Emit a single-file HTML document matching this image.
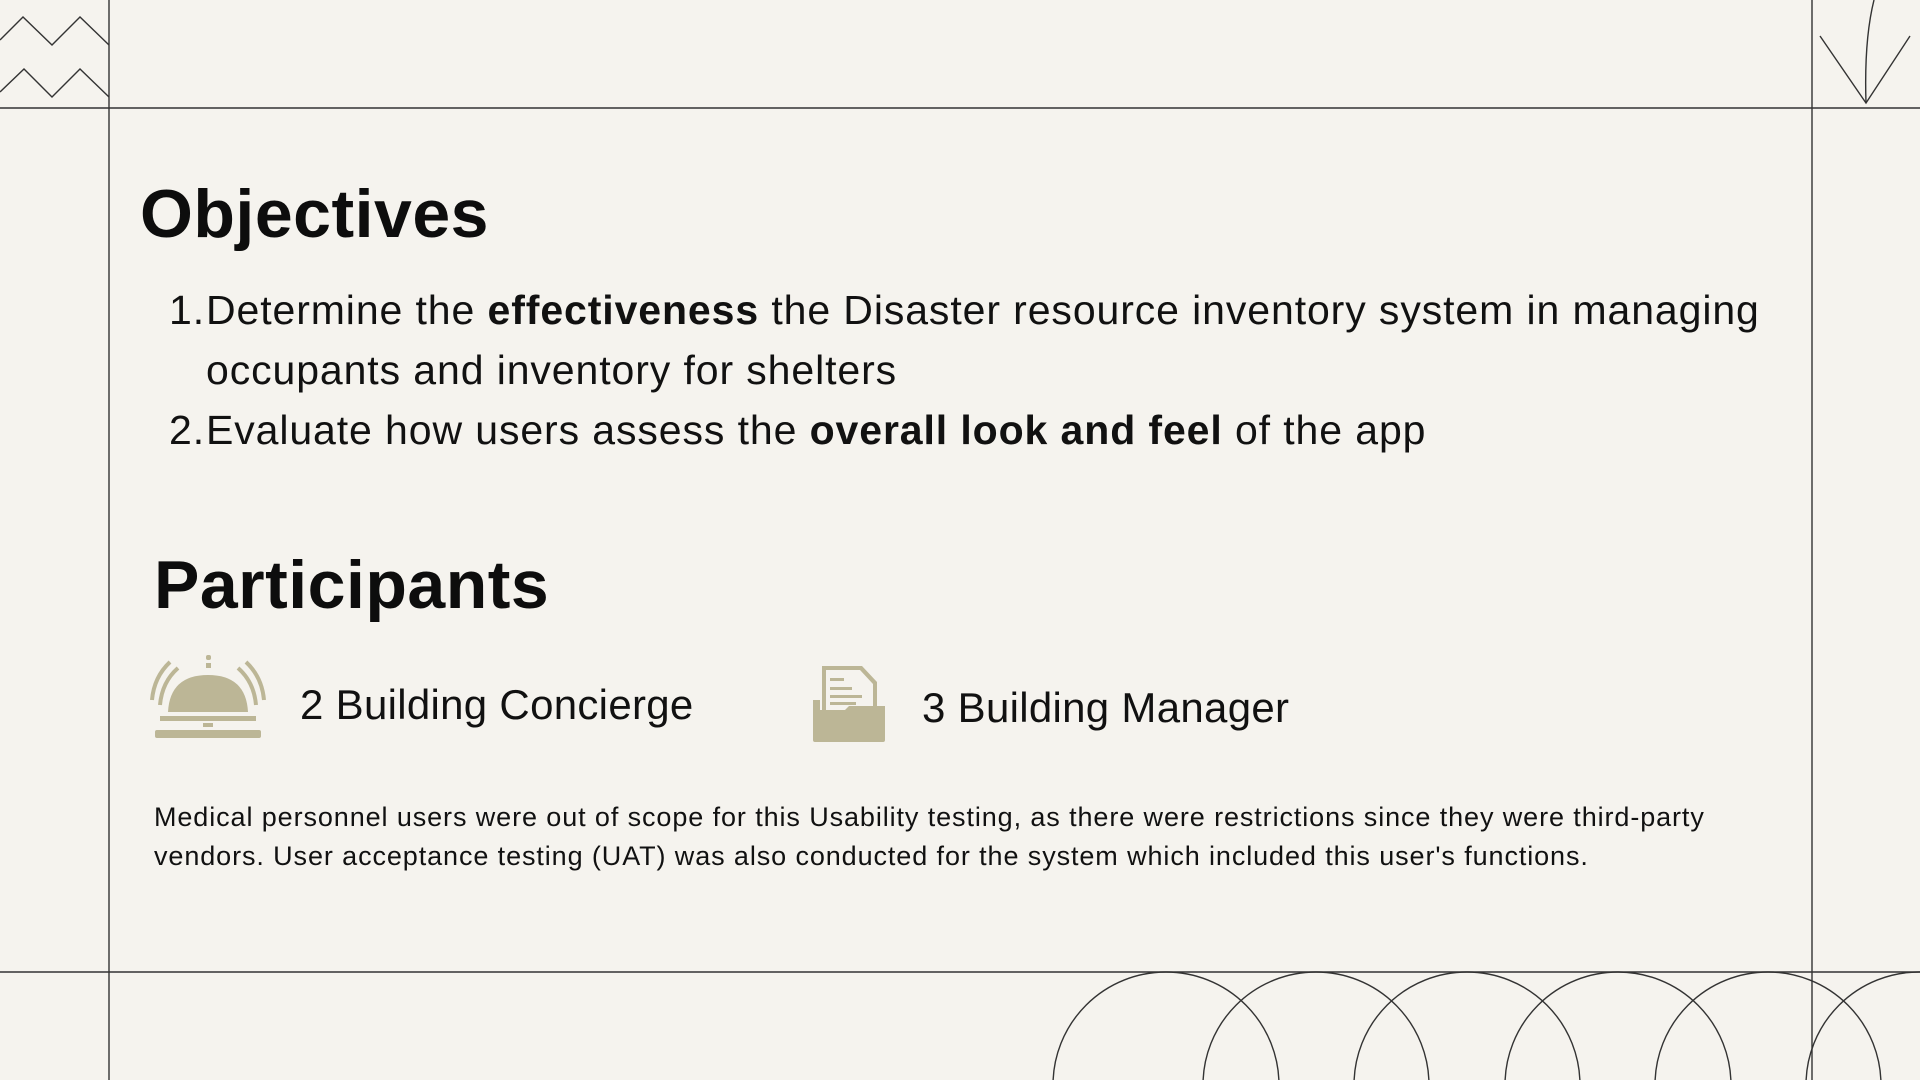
<!DOCTYPE html>
<html style="overflow:hidden"><head><meta charset="utf-8"><style>
html,body{margin:0;padding:0;width:1920px;height:1080px;overflow:hidden}
body{background:#f5f3ee;position:relative;font-family:"Liberation Sans",sans-serif;color:#111}
.a{position:absolute;white-space:nowrap}
svg{display:block;overflow:hidden}
h1{position:absolute;margin:0;font-size:68px;font-weight:bold;color:#0d0d0d;letter-spacing:0.5px}
.li{font-size:41px;line-height:60px;letter-spacing:0.9px}
</style></head><body>
<svg class="a" style="left:0;top:0" width="1920" height="1080" viewBox="0 0 1920 1080">
<g stroke="#333" stroke-width="1.4" fill="none">
<line x1="109" y1="0" x2="109" y2="1080"/>
<line x1="1812" y1="0" x2="1812" y2="1080"/>
<line x1="0" y1="108" x2="1920" y2="108"/>
<line x1="0" y1="972" x2="1920" y2="972"/>
<polyline points="0,40 23,17 52,45 80,17 109,45"/>
<polyline points="0,92 24,69 52,97 80,69 109,97"/>
<polyline points="1820,36 1866,103 1910,36"/>
<path d="M1874,0 Q1864,40 1866,103"/>
<circle cx="1166" cy="1085" r="113"/>
<circle cx="1316" cy="1085" r="113"/>
<circle cx="1467" cy="1085" r="113"/>
<circle cx="1618" cy="1085" r="113"/>
<circle cx="1768" cy="1085" r="113"/>
<circle cx="1919" cy="1085" r="113"/>
</g>
<g fill="#bcb696">
<rect x="206" y="655" width="5" height="5" rx="2"/>
<rect x="206" y="663" width="5" height="5"/>
<path d="M168,712 Q170,675 208,675 Q246,675 248,712 Z"/>
<rect x="160" y="716" width="96" height="5"/>
<rect x="203" y="723" width="10" height="4"/>
<rect x="155" y="730" width="106" height="8" rx="2"/>
<path d="M160,705 Q162,682 178,668" stroke="#bcb696" stroke-width="4" fill="none"/>
<path d="M152,700 Q154,677 170,662" stroke="#bcb696" stroke-width="4" fill="none"/>
<path d="M256,705 Q254,682 238,668" stroke="#bcb696" stroke-width="4" fill="none"/>
<path d="M264,700 Q262,677 246,662" stroke="#bcb696" stroke-width="4" fill="none"/>
<path d="M822,666 L862,666 L877,682 L877,712 L822,712 Z" fill="#bcb696"/>
<path d="M826,670 L860,670 L873,684 L873,712 L826,712 Z" fill="#f5f3ee"/>
<rect x="830" y="678" width="14" height="3"/><rect x="830" y="687" width="22" height="3"/><rect x="830" y="695" width="32" height="3"/><rect x="830" y="702" width="26" height="3"/>
<path d="M813,700 L820,700 L820,710 L845,710 L849,706 L885,706 L885,740 Q885,742 883,742 L815,742 Q813,742 813,740 Z"/>
</g>
</svg>
<h1 style="left:140px;top:175px">Objectives</h1>
<div class="a li" style="left:169px;top:280px">1.</div>
<div class="a li" style="left:206px;top:280px">Determine the <b>effectiveness</b> the Disaster resource inventory system in managing</div>
<div class="a li" style="left:206px;top:340px">occupants and inventory for shelters</div>
<div class="a li" style="left:169px;top:400px">2.</div>
<div class="a li" style="left:206px;top:400px">Evaluate how users assess the <b>overall look and feel</b> of the app</div>
<h1 style="left:154px;top:546px">Participants</h1>
<div class="a" style="left:300px;top:681px;font-size:42px;letter-spacing:0.3px">2 Building Concierge</div>
<div class="a" style="left:922px;top:684px;font-size:42px;letter-spacing:0.3px">3 Building Manager</div>
<div class="a" style="left:154px;top:798px;font-size:27px;line-height:39px;letter-spacing:0.9px">Medical personnel users were out of scope for this Usability testing, as there were restrictions since they were third-party<br>vendors. User acceptance testing (UAT) was also conducted for the system which included this user's functions.</div>
</body></html>
